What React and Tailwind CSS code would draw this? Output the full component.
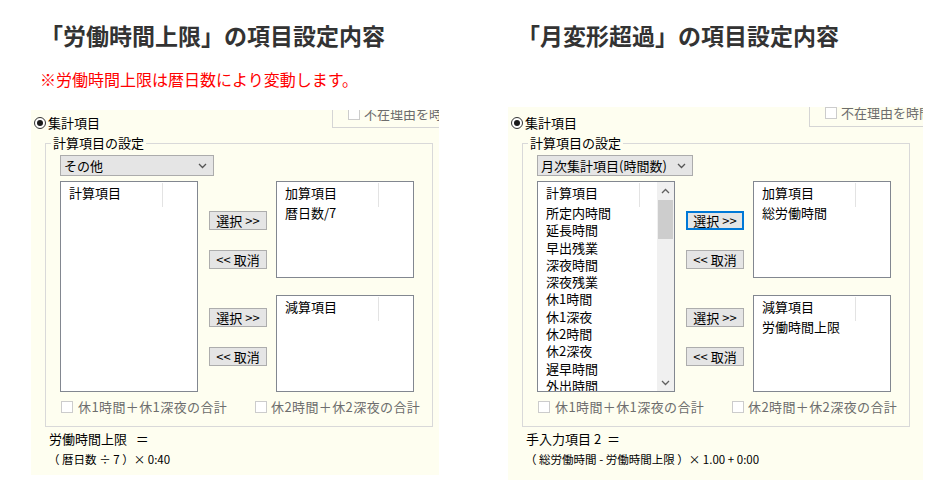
import React from "react";

const LEFT_ITEMS = [];
const RIGHT_ITEMS = [
  "所定内時間",
  "延長時間",
  "早出残業",
  "深夜時間",
  "深夜残業",
  "休1時間",
  "休1深夜",
  "休2時間",
  "休2深夜",
  "遅早時間",
  "外出時間",
];

const Chevron = ({ up, className }) => (
  <svg width="9" height="6" viewBox="0 0 9 6" className={className}>
    <path
      d={up ? "M1 5L4.5 1.5L8 5" : "M1 1L4.5 4.5L8 1"}
      fill="none"
      stroke="currentColor"
      strokeWidth="1.3"
    />
  </svg>
);

const Btn = ({ children, focused }) => (
  <div
    className={`h-[19px] flex items-center justify-center text-[13px] leading-none bg-[#e5e5e5] ${
      focused ? "border-2 border-[#0078d7]" : "border border-[#adadad]"
    }`}
  >
    {children}
  </div>
);

const CheckBox = () => (
  <div className="w-[12px] h-[12px] border border-[#cccccc] bg-white shrink-0" />
);

const ScrollBar = () => (
  <div className="w-[17px] h-full bg-[#f0f0f0] flex flex-col">
    <div className="h-[17px] flex items-center justify-center text-[#606060]">
      <Chevron up />
    </div>
    <div className="mx-[1px] mt-[1px] h-[39px] bg-[#cdcdcd]" />
    <div className="flex-1" />
    <div className="h-[17px] flex items-center justify-center text-[#606060]">
      <Chevron />
    </div>
  </div>
);

const ListBox = ({ title, items, h, scroll }) => (
  <div className={`bg-white border border-[#828790] overflow-hidden flex ${h}`}>
    <div className="flex-1 min-w-0 overflow-hidden">
      <div className="flex h-[22px]">
        <div className="w-[101px] pl-[8px] text-[13px] leading-[22px]">
          {title}
        </div>
        <div className="w-px h-[24px] mt-px bg-[#e3e3e3]" />
      </div>
      {items.map((it) => (
        <div key={it} className="pl-[8px] text-[13px] leading-[17.3px] whitespace-nowrap">
          {it}
        </div>
      ))}
    </div>
    {scroll && <ScrollBar />}
  </div>
);

const Panel = ({
  wrap,
  boxTop,
  radioMt,
  dropdown,
  dropdownW,
  items,
  scroll,
  add,
  sub,
  focused,
  label,
  formula,
}) => (
  <div className={`relative overflow-hidden bg-[#fefef0] ${wrap}`}>
    <div
      className={`absolute left-[301px] w-[200px] h-[38px] border border-[#d5d5d5] ${boxTop}`}
    >
      <div className="absolute left-[15px] top-[17px] flex items-center gap-[4px] text-[13px] leading-[12px] text-[#6d6d6d] whitespace-nowrap">
        <CheckBox />
        <span>不在理由を時間</span>
      </div>
    </div>

    <div className={`flex items-center h-[14px] pl-[3px] gap-[2px] text-[13px] ${radioMt}`}>
      <div className="w-[12px] h-[12px] rounded-full border border-[#333] bg-white flex items-center justify-center">
        <div className="w-[6px] h-[6px] rounded-full bg-[#1a1a1a]" />
      </div>
      <span className="leading-[14px]">集計項目</span>
    </div>

    <fieldset className="ml-[14px] mt-[6px] w-[388px] border border-[#d9d9d9] pl-[14px] pb-[12px]">
      <legend className="ml-[-9px] px-[2px] text-[13px] leading-[14px]">
        計算項目の設定
      </legend>
      <div
        className={`mt-[5px] h-[21px] border border-[#acacac] bg-[#e5e5e5] flex items-center justify-between pl-[3px] pr-[6px] text-[13px] ${dropdownW}`}
      >
        <span className="leading-none">{dropdown}</span>
        <Chevron className="text-[#555]" />
      </div>

      <div className="mt-[5px] flex">
        <div className="w-[138px]">
          <ListBox title="計算項目" items={items} h="h-[211px]" scroll={scroll} />
        </div>
        <div className="ml-[11px] w-[58px] pt-[30px] flex flex-col">
          <Btn focused={focused}>選択 &gt;&gt;</Btn>
          <div className="mt-[20px]">
            <Btn>&lt;&lt; 取消</Btn>
          </div>
          <div className="mt-[39px]">
            <Btn>選択 &gt;&gt;</Btn>
          </div>
          <div className="mt-[20px]">
            <Btn>&lt;&lt; 取消</Btn>
          </div>
        </div>
        <div className="ml-[9px] w-[138px] flex flex-col gap-[17px]">
          <ListBox title="加算項目" items={add} h="h-[97px]" />
          <ListBox title="減算項目" items={sub} h="h-[97px]" />
        </div>
      </div>

      <div className="mt-[8px] h-[14px] flex text-[13px] tracking-[0.4px] text-[#6d6d6d]">
        <div className="w-[195px] pl-[1px] flex items-center gap-[5px] whitespace-nowrap">
          <CheckBox />
          <span className="leading-[14px]">休1時間＋休1深夜の合計</span>
        </div>
        <div className="flex items-center gap-[4px] whitespace-nowrap">
          <CheckBox />
          <span className="leading-[14px]">休2時間＋休2深夜の合計</span>
        </div>
      </div>
    </fieldset>

    <div className="mt-[4px] pl-[18px] text-[13px] leading-[16px] whitespace-pre">
      {label}
    </div>
    <div className="mt-[5px] pl-[17px] text-[11.5px] leading-[14px] whitespace-pre">
      {formula}
    </div>
  </div>
);

export default function App() {
  return (
    <div className="w-[945px] h-[501px] overflow-hidden bg-white flex font-['Noto_Sans_CJK_JP',sans-serif] text-black">
      <div className="ml-[31px] w-[408px]">
        <h1 className="mt-[24px] pl-[9px] h-[23px] text-[23px] leading-[23px] font-bold text-[#333] whitespace-nowrap">
          「労働時間上限」の項目設定内容
        </h1>
        <p className="mt-[23px] pl-[9px] text-[16px] leading-[18px] text-[#ff0000] whitespace-nowrap">
          ※労働時間上限は暦日数により変動します。
        </p>
        <div className="mt-[22px]">
          <Panel
            wrap="w-[408px] h-[365px]"
            boxTop="top-[-20px]"
            radioMt="mt-[6px]"
            dropdown="その他"
            dropdownW="w-[154px]"
            items={LEFT_ITEMS}
            add={["暦日数/7"]}
            sub={[]}
            label={"労働時間上限   ＝"}
            formula={"（ 暦日数 ÷ 7 ）× 0:40"}
          />
        </div>
      </div>

      <div className="ml-[69px] w-[415px]">
        <h1 className="mt-[24px] pl-[9px] h-[23px] text-[23px] leading-[23px] font-bold text-[#333] whitespace-nowrap">
          「月変形超過」の項目設定内容
        </h1>
        <div className="mt-[60px]">
          <Panel
            wrap="w-[415px] h-[373px]"
            boxTop="top-[-18px]"
            radioMt="mt-[9px]"
            dropdown="月次集計項目(時間数)"
            dropdownW="w-[156px]"
            items={RIGHT_ITEMS}
            scroll
            focused
            add={["総労働時間"]}
            sub={["労働時間上限"]}
            label={"手入力項目 2  ＝"}
            formula={"（ 総労働時間 - 労働時間上限 ）× 1.00 + 0:00"}
          />
        </div>
      </div>
    </div>
  );
}
